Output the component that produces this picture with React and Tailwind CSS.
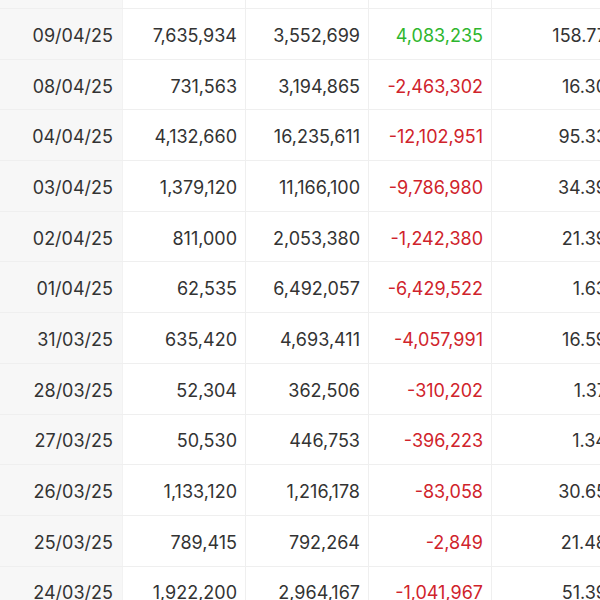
import React from 'react';

const rows = [
  ['', '', '', '', ''],
  ['09/04/25', '7,635,934', '3,552,699', '4,083,235', '158.77'],
  ['08/04/25', '731,563', '3,194,865', '-2,463,302', '16.30'],
  ['04/04/25', '4,132,660', '16,235,611', '-12,102,951', '95.33'],
  ['03/04/25', '1,379,120', '11,166,100', '-9,786,980', '34.39'],
  ['02/04/25', '811,000', '2,053,380', '-1,242,380', '21.39'],
  ['01/04/25', '62,535', '6,492,057', '-6,429,522', '1.63'],
  ['31/03/25', '635,420', '4,693,411', '-4,057,991', '16.59'],
  ['28/03/25', '52,304', '362,506', '-310,202', '1.37'],
  ['27/03/25', '50,530', '446,753', '-396,223', '1.34'],
  ['26/03/25', '1,133,120', '1,216,178', '-83,058', '30.65'],
  ['25/03/25', '789,415', '792,264', '-2,849', '21.48'],
  ['24/03/25', '1,922,200', '2,964,167', '-1,041,967', '51.39'],
];

const App = () => {
  return (
    <div className="w-[600px] h-[600px] overflow-hidden bg-white" style={{ fontFamily: 'Inter, "Noto Sans", sans-serif' }}>
      {/* first row is the tail of a row scrolled off the top */}
      <div className="-mt-[41.7px] w-[640px]">
        {rows.map((r, i) => {
          const net = r[3];
          const netColor = net.startsWith('-') ? 'text-[#d0232b]' : 'text-[#2eb62e]';
          return (
            <div
              key={i}
              className="flex h-[50.7px] border-b border-[#efefef] text-[18px] text-[#333333]"
            >
              <div className="w-[123px] shrink-0 bg-[#f7f7f7] border-r border-[#f2f2f2] flex items-center justify-end pr-[9px] pt-[3px]">
                {r[0]}
              </div>
              <div className="w-[123px] shrink-0 border-r border-[#efefef] flex items-center justify-end pr-[8px] pt-[3px]">
                {r[1]}
              </div>
              <div className="w-[123px] shrink-0 border-r border-[#efefef] flex items-center justify-end pr-[8px] pt-[3px]">
                {r[2]}
              </div>
              <div className={`w-[123px] shrink-0 border-r border-[#efefef] flex items-center justify-end pr-[8px] pt-[3px] ${netColor}`}>
                {net}
              </div>
              <div className="w-[123px] shrink-0 flex items-center justify-end pr-[8px] pt-[3px]">
                {r[4]}
              </div>
            </div>
          );
        })}
      </div>
    </div>
  );
};

export default App;
